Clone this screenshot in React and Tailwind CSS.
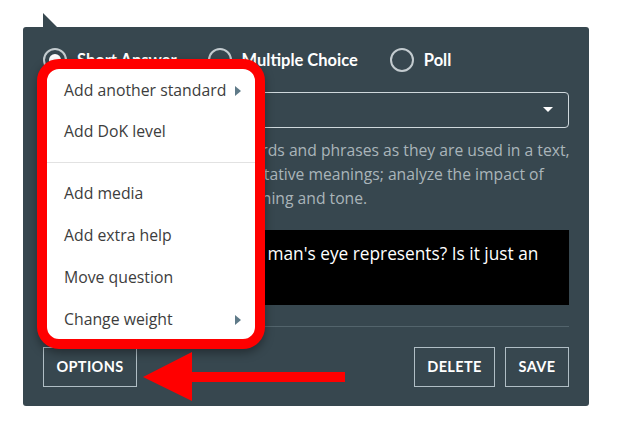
import React from "react";

const menuItems = [
  { label: "Add another standard", sub: true, h: "h-[41px]" },
  { label: "Add DoK level", h: "h-[41px]" },
  { divider: true },
  { label: "Add media", h: "h-[42px]" },
  { label: "Add extra help", h: "h-[42px]" },
  { label: "Move question", h: "h-[42px]" },
  { label: "Change weight", sub: true, h: "h-[42px]" },
];

const body = { fontFamily: "'Open Sans', Lato, sans-serif" };

const Radio = ({ label, checked, className = "" }) => (
  <div className={`flex items-center ${className}`}>
    <span className="w-6 h-6 rounded-full border-2 border-[#c3cbcf] flex items-center justify-center">
      {checked && <span className="w-3 h-3 rounded-full bg-white" />}
    </span>
    <span className="ml-[10px] text-white font-bold text-[16.5px]">{label}</span>
  </div>
);

const Caret = () => (
  <svg width="6" height="10" viewBox="0 0 6 10" className="ml-auto">
    <path d="M0 0 L6 5 L0 10 Z" fill="#5f7a88" />
  </svg>
);

export default function App() {
  return (
    <div
      className="relative w-[640px] h-[423px] bg-white pt-[27px] pl-[23px] overflow-hidden"
      style={{ fontFamily: "Lato, 'Open Sans', sans-serif" }}
    >
      {/* pointer of the popover */}
      <svg className="absolute left-[43px] top-[13px]" width="15" height="15" viewBox="0 0 15 15">
        <path d="M0 0 L14 14 L0 14 Z" fill="#37474f" />
      </svg>

      <div className="relative w-[566px] h-[379px] bg-[#37474f] rounded-[3px] px-5 pt-5">
        <div className="flex items-center h-6 mt-px">
          <Radio label="Short Answer" checked />
          <Radio label="Multiple Choice" className="ml-[31px]" />
          <Radio label="Poll" className="ml-[32px]" />
        </div>

        <div className="mt-5 h-[36px] rounded-[4px] border border-[#cfd8dc] flex items-center px-3">
          <span className="text-white text-[15px]" style={body}>RL.6.4</span>
          <svg width="10" height="6" viewBox="0 0 10 6" className="ml-auto mr-[3px]">
            <path d="M0 0 L10 0 L5 5 Z" fill="#ffffff" />
          </svg>
        </div>

        <p className="mt-[10px] text-[15.7px] leading-[24px] text-[#aab5ba] whitespace-nowrap" style={body}>
          Determine the meaning of words and phrases as they are used in a text,
          <br />
          including figurative and connotative meanings; analyze the impact of
          <br />
          a specific word choice on meaning and tone.
        </p>

        <div className="mt-5 h-[75px] bg-black px-3 pt-3 text-white text-[17.3px] leading-[24px] whitespace-nowrap" style={body}>
          What do you think the old man's eye represents? Is it just an
          <br />
          eye?
        </div>

        <div className="mt-[21px] border-t border-[#53646c]" />

        <div className="mt-5 flex items-center">
          <button className="h-[40px] w-[94px] border border-[#b0bec5] text-white font-bold text-[14.5px] tracking-wide">
            OPTIONS
          </button>
          <button className="ml-auto h-[40px] w-[81px] border border-[#b0bec5] text-white font-bold text-[14.5px] tracking-wide">
            DELETE
          </button>
          <button className="ml-[10px] h-[40px] w-[64px] border border-[#b0bec5] text-white font-bold text-[14.5px] tracking-wide">
            SAVE
          </button>
        </div>

        {/* options menu */}
        <div
          className="absolute left-[14px] top-[32px] w-[228px] h-[290px] rounded-[22px] border-[10px] border-[#ff0000] bg-white pt-px shadow-[0_4px_10px_rgba(0,0,0,0.35)] overflow-hidden"
          style={body}
        >
          {menuItems.map((item, i) =>
            item.divider ? (
              <div key={i} className="py-[10px]">
                <div className="border-t border-[#e2e2e2]" />
              </div>
            ) : (
              <div key={i} className={`${item.h} flex items-center pl-[17px] pr-[14px] text-[15.8px] text-[#3d3d3d]`}>
                <span>{item.label}</span>
                {item.sub && <Caret />}
              </div>
            )
          )}
        </div>
      </div>

      {/* red arrow */}
      <svg className="absolute left-0 top-0 pointer-events-none" width="640" height="423" viewBox="0 0 640 423">
        <path d="M143 377 L192 352 L192 372 L345 372 L345 382 L192 382 L192 401 Z" fill="#ff0000" />
      </svg>
    </div>
  );
}
